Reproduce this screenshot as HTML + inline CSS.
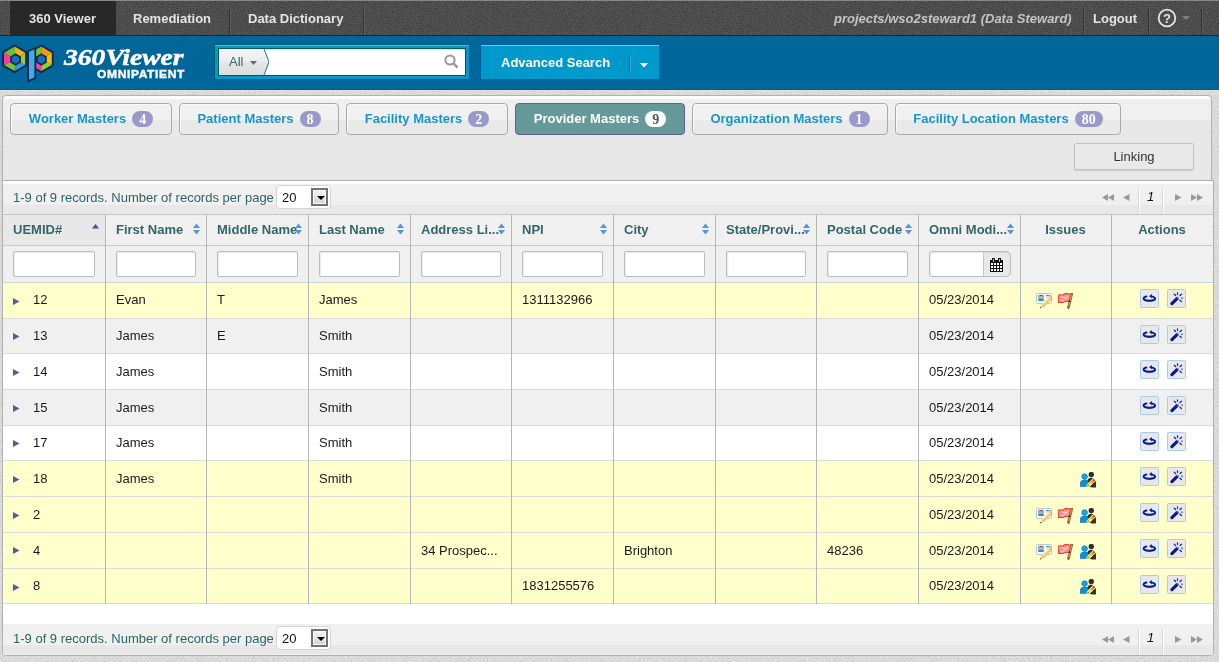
<!DOCTYPE html>
<html><head><meta charset="utf-8"><title>360 Viewer</title>
<style>
*{box-sizing:border-box;margin:0;padding:0}
html,body{width:1219px;height:662px;overflow:hidden}
body{position:relative;font-family:"Liberation Sans",sans-serif;font-size:13px;background:#d9d9d9;color:#222}
.a{position:absolute;white-space:nowrap}
/* top bar */
#top{left:0;top:0;width:1219px;height:36px;background:#1e1e1e;border-top:1px solid #878787;border-bottom:1px solid #262222}
.tt{font-weight:bold;color:#e4e4e4;line-height:15px;top:11px}
.sep{top:9px;width:2px;height:26px;border-left:1px solid #323232;border-right:1px solid #5c5c5c}
/* blue */
#blue{left:0;top:36px;width:1219px;height:53px;background:#0068a6;overflow:hidden}
.tab{top:103px;height:32px;border:1px solid #a9a9a9;border-radius:4px;background:linear-gradient(#f1f1f1 0,#f1f1f1 16px,#e9e9e9 16px);box-shadow:inset 1px 1px 0 #fafafa;text-align:center;line-height:30px;font-weight:bold;color:#1a95cc}
.tab .bd{display:inline-block;margin-left:6px;height:16px;padding:0 7px;border-radius:8px;background:#9999cc;color:#fff;font-family:"Liberation Serif",serif;font-size:14px;line-height:17px;vertical-align:-1px;text-align:center}
.tab.act{background:#669999;border-color:#5d5d9a;color:#fff;box-shadow:none}
.tab.act .bd{background:#fff;color:#336666}
.tb{color:#2e6464;line-height:15px}
.th{top:222px;font-weight:bold;color:#336666;line-height:15px}
.fi{top:251px;width:82px;height:26px;border:1px solid #bcbcbc;border-radius:2px;background:#fff;box-shadow:inset 1px 1px 1px rgba(0,0,0,.08)}
.td{line-height:15px;color:#1a1a1a}
.ab{width:19px;height:19px;border:1px solid #a8ccf4;border-radius:1.5px;background:#e8e8e8;padding:0}
.ab svg{display:block}
.sel{width:55px;height:24px;border:1px solid #d4d4d4;border-radius:4px;background:#fff}
.sel span{position:absolute;left:5px;top:4px;line-height:15px;color:#111;font-size:13px}
.sel i{position:absolute;left:34px;top:2px;width:17px;height:18px;border:2px solid #727272;box-shadow:inset 0 0 0 1px #fafafa;background:linear-gradient(#f4f4f4,#d4d4d4)}
.sel i:after{content:"";position:absolute;left:3.5px;top:5.5px;border-left:4px solid transparent;border-right:4px solid transparent;border-top:4.5px solid #000}
</style></head><body><div id="wrap" style="position:absolute;left:0;top:0;width:1219px;height:662px;will-change:transform">
<svg width="0" height="0" style="position:absolute"><defs>
<symbol id="ic_i" viewBox="0 0 16 16"><rect x="0.5" y="0.5" width="15" height="10" rx="0.8" fill="#fbfbfb" stroke="#c4c4c4"/><rect x="2" y="1.8" width="6" height="6.2" fill="#7cbcf0"/><path d="M2.3 8Q2.6 5.6 5 5.6Q7.4 5.6 7.7 8Z" fill="#2a8ae0"/><circle cx="5" cy="4" r="1.6" fill="#f2b070"/><path d="M3.4 3.6Q3.6 2 5 2Q6.6 2 6.6 3.4Q5.2 2.6 3.4 3.6Z" fill="#8a3a20"/><rect x="9.8" y="2" width="4.2" height="1.2" rx="0.5" fill="#3a9ae8"/><rect x="9.8" y="4.2" width="4" height="0.8" fill="#d8d8d8"/><path d="M5.6 11.6L13.4 3.8L15.8 6.2L8 14Z" fill="#f6c458"/><path d="M5.6 11.6L13.4 3.8L14.3 4.7L6.5 12.5Z" fill="#fde8b0"/><path d="M13.4 3.8L14.6 2.6L17 5L15.8 6.2Z" fill="#f0a0a0"/><path d="M3.8 15.6L5.6 11.6L8 14Z" fill="#f4e0c0"/><path d="M3.8 15.6L4.6 13.8L5.6 14.8Z" fill="#5a2a10"/><path d="M5.6 11.6L8 14" stroke="#8ab040" stroke-width="0.6"/></symbol>
<symbol id="ic_f" viewBox="0 0 16 16"><path d="M0.8 2Q3 1.5 5 2.2Q6 0.6 8 0.5Q10.5 0.6 12.6 1.2L11.8 8Q9 8.6 7.4 8.4Q6.2 8.8 5.8 9.2Q3.2 9.8 0.6 9.4Z" fill="#ff9898" stroke="#f03a1a" stroke-width="1.1"/><path d="M2.5 4.5Q4.5 3.5 6 4.6T10 3.5M2.8 7Q5 6.5 6.5 7.2" stroke="#fff0f0" stroke-width="1" fill="none" opacity="0.8"/><path d="M3 5Q4 4 5 5.6L4 7Z" fill="#ff5a5a"/><path d="M13.8 0.6L10.4 14.6" stroke="#9a6028" stroke-width="2.6" stroke-linecap="round"/><path d="M13.6 1.4L10.8 13" stroke="#e0c060" stroke-width="0.8"/><circle cx="11.5" cy="8.2" r="0.9" fill="#222"/></symbol>
<symbol id="ic_u" viewBox="0 0 16 16"><circle cx="11.3" cy="2.6" r="2.7" fill="#2e2e2e"/><path d="M6.8 9.5Q8.2 5.6 11.3 5.8Q14.8 6 15.8 9.5V15H9Z" fill="#2e2e2e"/><circle cx="4.6" cy="4.6" r="2.8" fill="#12a6e8" stroke="#0a6fb8" stroke-width="0.7"/><path d="M0.2 14.6V11Q0.6 8 4.6 8Q8.4 8 8.8 11V14.6Z" fill="#0d8fd4" stroke="#0a6fb8" stroke-width="0.6"/><path d="M11.2 15.6L15.9 10V15.6Z" fill="#333"/><path d="M6.2 15.4L7 12.4L13.6 5.6L16.2 8.2L9.4 15Z" fill="#fff"/><path d="M7.2 14.4L7.8 12.6L13.6 6.8L15 8.2L9.2 14Z" fill="#f8e000"/><path d="M10.6 10L13.6 6.8L15 8.2L12 11.4Z" fill="#ff8a00"/><path d="M12.6 7.8L13.6 6.8L15 8.2L14 9.2Z" fill="#e82a10"/><path d="M7.2 14.4L7.8 12.6L9.2 14Z" fill="#6a6a10"/></symbol>
<symbol id="ic_r" viewBox="0 0 17 17"><path d="M5.4 6.5Q2.5 7.2 2.6 8.7Q2.9 10.7 8.4 10.7Q14 10.7 14.1 8.6Q14.1 7.3 11.2 6.6" fill="none" stroke="#0a1e96" stroke-width="2" stroke-linecap="round"/><path d="M3.6 9.6Q5 11.2 8.4 11.2Q12 11.2 13.4 9.6" fill="none" stroke="#0a1e96" stroke-width="0.8"/><path d="M8 6.3L10.7 3.9L11.1 8.3Z" fill="#0a1e96"/></symbol>
<symbol id="ic_w" viewBox="0 0 17 17"><path d="M3.9 13.6L9.3 8.4" stroke="#0a1a8c" stroke-width="3.2" stroke-linecap="round"/><path d="M9.4 8.2L10.6 7.2" stroke="#8aa8ff" stroke-width="2"/><path d="M9.5 3V4.3M6.3 4.2L7.6 5.5M13.6 4.3L12 5.6M12 10.3L13.4 11.6" stroke="#1a2aa0" stroke-width="1.3" stroke-linecap="round"/><rect x="13.2" y="7.4" width="1.6" height="1.6" fill="#3a7ad8"/></symbol>
</defs></svg>


<svg class="a" style="left:0;top:0" width="1219" height="662"><filter id="nz2" x="0" y="0" width="100%" height="100%"><feTurbulence type="fractalNoise" baseFrequency="0.7" numOctaves="2" seed="11"/><feColorMatrix values="1 0 0 0 0  1 0 0 0 0  1 0 0 0 0  0 0 0 0 0.25"/></filter><rect width="1219" height="662" fill="#e4e4e4"/><rect width="1219" height="662" filter="url(#nz2)"/></svg>
<div id="top" class="a"></div>
<svg class="a" style="left:0;top:1px" width="1219" height="34"><filter id="nz" x="0" y="0" width="100%" height="100%"><feTurbulence type="fractalNoise" baseFrequency="0.8" numOctaves="2" seed="7"/><feColorMatrix values="1 0 0 0 0  1 0 0 0 0  1 0 0 0 0  0 0 0 0 0.3"/></filter><rect width="1219" height="34" filter="url(#nz)"/></svg>
<div class="a" style="left:10px;top:1px;width:106px;height:34px;background:#282828"></div>
<div class="a tt" style="left:29px">360 Viewer</div>
<div class="a tt" style="left:133px">Remediation</div>
<div class="a sep" style="left:229px"></div>
<div class="a tt" style="left:248px">Data Dictionary</div>
<div class="a sep" style="left:363px"></div>
<div class="a tt" style="left:834px;font-style:italic;color:#c4c4c4">projects/wso2steward1 (Data Steward)</div>
<div class="a sep" style="left:1083px"></div>
<div class="a tt" style="left:1093px">Logout</div>
<div class="a sep" style="left:1148px"></div>
<svg class="a" style="left:1157px;top:8px" width="20" height="20" viewBox="0 0 20 20"><circle cx="10" cy="10" r="8.3" fill="none" stroke="#e6e6e6" stroke-width="1.8"/><text x="10" y="14.6" text-anchor="middle" font-family="Liberation Sans" font-weight="bold" font-size="13" fill="#e6e6e6">?</text></svg>
<svg class="a" style="left:1182px;top:16px" width="8" height="5"><path d="M0 0H8L4 4Z" fill="#808080"/></svg>
<div class="a sep" style="left:1201px"></div>

<svg class="a" style="left:0;top:36px" width="1219" height="54">
<defs><pattern id="st" width="4" height="4" patternUnits="userSpaceOnUse"><rect width="4" height="4" fill="#006699"/><rect x="3" y="0" width="1" height="1" fill="#0060d8"/><rect x="2" y="1" width="1" height="1" fill="#0060d8"/><rect x="1" y="2" width="1" height="1" fill="#0060d8"/><rect x="0" y="3" width="1" height="1" fill="#0060d8"/></pattern></defs>
<rect width="1219" height="54" fill="url(#st)" shape-rendering="crispEdges"/>
<rect y="53" width="1219" height="1" fill="#0a5590"/>
</svg>
<!-- logo -->
<svg class="a" style="left:0;top:36px" width="200" height="54" viewBox="0 36 200 54">
<polygon points="14.60,44.40 27.07,51.60 27.07,66.00 14.60,73.20 2.13,66.00 2.13,51.60" fill="#0b2a5c"/>
<polygon points="15.60,59.50 14.60,46.60 25.17,52.70" fill="#f5b800"/>
<polygon points="15.60,59.50 25.17,52.70 25.17,64.90" fill="#9ccc2a"/>
<polygon points="15.60,59.50 25.17,64.90 14.60,71.00" fill="#2aa0d8"/>
<polygon points="15.60,59.50 14.60,71.00 4.03,64.90" fill="#7cc22a"/>
<polygon points="15.60,59.50 4.03,64.90 4.03,52.70" fill="#ff3c9a"/>
<polygon points="15.60,59.50 4.03,52.70 14.60,46.60" fill="#6cc030"/>
<polygon points="15.60,53.30 20.97,56.40 20.97,62.60 15.60,65.70 10.23,62.60 10.23,56.40" fill="#0b2a5c"/>
<polygon points="15.60,55.30 19.24,57.40 19.24,61.60 15.60,63.70 11.96,61.60 11.96,57.40" fill="#1a6fb0"/>
<polygon points="41.20,44.40 53.67,51.60 53.67,66.00 41.20,73.20 28.73,66.00 28.73,51.60" fill="#0b2a5c"/>
<polygon points="41.40,59.50 41.20,46.60 51.77,52.70" fill="#f59a10"/>
<polygon points="41.40,59.50 51.77,52.70 51.77,64.90" fill="#f5c000"/>
<polygon points="41.40,59.50 51.77,64.90 41.20,71.00" fill="#9ccc2a"/>
<polygon points="41.40,59.50 41.20,71.00 30.63,64.90" fill="#ff3c9a"/>
<polygon points="41.40,59.50 30.63,64.90 30.63,52.70" fill="#9ccc2a"/>
<polygon points="41.40,59.50 30.63,52.70 41.20,46.60" fill="#7cc22a"/>
<polygon points="41.40,53.30 46.77,56.40 46.77,62.60 41.40,65.70 36.03,62.60 36.03,56.40" fill="#0b2a5c"/>
<polygon points="41.40,55.30 45.04,57.40 45.04,61.60 41.40,63.70 37.76,61.60 37.76,57.40" fill="#1a6fb0"/>
<polygon points="27.2,50.5 36.2,47 36.2,78.5 27.2,82.5" fill="#0b2a5c"/><polygon points="29,51.8 34.4,49.6 34.4,77.4 29,79.8" fill="#4aa8e0"/>
<text x="0" y="0" transform="translate(64,64.5) scale(1.2,1)" font-family="Liberation Serif" font-style="italic" font-weight="bold" font-size="23" fill="#fff" stroke="#fff" stroke-width="0.5">360Viewer</text>
<text x="0" y="0" transform="translate(97,77.6) scale(1.2,1)" font-family="Liberation Sans" font-weight="bold" font-size="10" letter-spacing="0.55" fill="#fff" stroke="#fff" stroke-width="0.35">OMNIPATIENT</text>
</svg>
<!-- search -->
<div class="a" style="left:214px;top:44px;width:256px;height:36px;background:#0099cc;border:1px solid #005f66;box-shadow:inset 0 1px 0 #33cccc"></div>
<div class="a" style="left:218px;top:48px;width:248px;height:28px;background:#fff;border:1px solid #005a5a;box-shadow:inset 0 2px 2px -1px #d8d4d4"></div>
<svg class="a" style="left:219px;top:49px" width="50" height="26"><defs><linearGradient id="ag" x1="0" y1="0" x2="0" y2="1"><stop offset="0" stop-color="#f6f6f6"/><stop offset="0.5" stop-color="#ececec"/><stop offset="0.5" stop-color="#e6e6e6"/><stop offset="1" stop-color="#dcdcdc"/></linearGradient></defs><path d="M0 0H45L50 13L45 26H0Z" fill="url(#ag)"/><path d="M45 0L50 13L45 26" fill="none" stroke="#2a6ab0" stroke-width="1"/></svg>
<div class="a" style="left:229px;top:54px;line-height:15px;color:#336666">All</div>
<svg class="a" style="left:250px;top:61px" width="8" height="5"><path d="M0 0H7L3.5 4Z" fill="#6a5fa0"/></svg>
<svg class="a" style="left:443px;top:53px" width="18" height="18"><circle cx="7" cy="7" r="4.6" fill="none" stroke="#999" stroke-width="2"/><path d="M10.2 10.2L14.6 14.6" stroke="#999" stroke-width="2.6"/></svg>
<!-- advanced search -->
<div class="a" style="left:481px;top:45px;width:178px;height:34px;background:#0099cc;border-top:1px solid #66ccff;box-shadow:0 0 0 1px #005f95"></div>
<div class="a" style="left:501px;top:55px;line-height:15px;font-weight:bold;color:#fff">Advanced Search</div>
<div class="a" style="left:629px;top:56px;width:2px;height:17px;border-left:1px solid #0a4f9a;border-right:1px solid #30aee0"></div>
<svg class="a" style="left:640px;top:63px" width="9" height="5"><path d="M0 0H8L4 4.5Z" fill="#fff"/></svg>

<!-- tab panel -->
<div class="a" style="left:0;top:90px;width:1219px;height:1px;background:#e4e0de"></div>
<div class="a" style="left:2px;top:95px;width:1210px;height:86px;border:1px solid #b0b0b0;border-radius:4px 4px 0 0;background:linear-gradient(#fff 0,#fff 3px,#f0f0f0 3px,#f0f0f0 24px,#e8e8e8 24px)"></div>
<div class="a tab" style="left:10px;width:162px"><span class="tn">Worker Masters</span><span class="bd">4</span></div>
<div class="a tab" style="left:179px;width:160px"><span class="tn">Patient Masters</span><span class="bd">8</span></div>
<div class="a tab" style="left:346px;width:162px"><span class="tn">Facility Masters</span><span class="bd">2</span></div>
<div class="a tab act" style="left:515px;width:170px"><span class="tn">Provider Masters</span><span class="bd">9</span></div>
<div class="a tab" style="left:692px;width:196px"><span class="tn">Organization Masters</span><span class="bd">1</span></div>
<div class="a tab" style="left:895px;width:226px"><span class="tn">Facility Location Masters</span><span class="bd">80</span></div>
<div class="a" style="left:1074px;top:143px;width:120px;height:27px;border:1px solid #c4c4c4;border-radius:2px;background:#e9e9e9;box-shadow:0 1px 1px rgba(0,0,0,.12);color:#333;text-align:center;line-height:25px">Linking</div>
<!-- grid -->
<div class="a" style="left:2px;top:180px;width:1212px;height:476px;border:1px solid #b0b0b0;border-radius:0 0 4px 4px;background:#fff;overflow:hidden">
</div>
<div class="a" style="left:3px;top:181px;width:1210px;height:33px;background:linear-gradient(#fff 0,#fff 3px,#f0f0f0 3px,#f0f0f0 24px,#e8e8e8 24px)"></div>
<div class="a tb" style="left:13px;top:190px">1-9 of 9 records. Number of records per page</div>
<div class="a" style="left:3px;top:214px;width:1210px;height:68px;background:#f0f0f0;border-top:1px solid #c4c4c4"></div>
<div class="a" style="left:3px;top:215px;width:102px;height:30px;background:#e8e8e8"></div>
<div class="a" style="left:3px;top:245px;width:1210px;height:1px;background:#c8c8c8"></div>
<div class="a th" style="left:13px">UEMID#</div>
<div class="a th" style="left:116px">First Name</div>
<div class="a th" style="left:217px">Middle Name</div>
<div class="a th" style="left:319px">Last Name</div>
<div class="a th" style="left:421px">Address Li...</div>
<div class="a th" style="left:522px">NPI</div>
<div class="a th" style="left:624px">City</div>
<div class="a th" style="left:726px">State/Provi...</div>
<div class="a th" style="left:827px">Postal Code</div>
<div class="a th" style="left:929px">Omni Modi...</div>
<div class="a th" style="left:1020px;width:91px;text-align:center">Issues</div>
<div class="a th" style="left:1111px;width:102px;text-align:center">Actions</div>
<svg class="a" style="left:92px;top:224px" width="8" height="5"><path d="M0 4.5L3.5 0L7 4.5Z" fill="#4f4f8f"/></svg>
<svg class="a" style="left:193px;top:223px" width="8" height="12"><path d="M0 5L3.5 0.5L7 5Z M0 7L3.5 11.5L7 7Z" fill="#5b93d3"/></svg>
<svg class="a" style="left:295px;top:223px" width="8" height="12"><path d="M0 5L3.5 0.5L7 5Z M0 7L3.5 11.5L7 7Z" fill="#5b93d3"/></svg>
<svg class="a" style="left:397px;top:223px" width="8" height="12"><path d="M0 5L3.5 0.5L7 5Z M0 7L3.5 11.5L7 7Z" fill="#5b93d3"/></svg>
<svg class="a" style="left:498px;top:223px" width="8" height="12"><path d="M0 5L3.5 0.5L7 5Z M0 7L3.5 11.5L7 7Z" fill="#5b93d3"/></svg>
<svg class="a" style="left:600px;top:223px" width="8" height="12"><path d="M0 5L3.5 0.5L7 5Z M0 7L3.5 11.5L7 7Z" fill="#5b93d3"/></svg>
<svg class="a" style="left:702px;top:223px" width="8" height="12"><path d="M0 5L3.5 0.5L7 5Z M0 7L3.5 11.5L7 7Z" fill="#5b93d3"/></svg>
<svg class="a" style="left:803px;top:223px" width="8" height="12"><path d="M0 5L3.5 0.5L7 5Z M0 7L3.5 11.5L7 7Z" fill="#5b93d3"/></svg>
<svg class="a" style="left:905px;top:223px" width="8" height="12"><path d="M0 5L3.5 0.5L7 5Z M0 7L3.5 11.5L7 7Z" fill="#5b93d3"/></svg>
<svg class="a" style="left:1007px;top:223px" width="8" height="12"><path d="M0 5L3.5 0.5L7 5Z M0 7L3.5 11.5L7 7Z" fill="#5b93d3"/></svg>
<div class="a fi" style="left:13px;width:82px"></div>
<div class="a fi" style="left:116px;width:80px"></div>
<div class="a fi" style="left:217px;width:81px"></div>
<div class="a fi" style="left:319px;width:81px"></div>
<div class="a fi" style="left:421px;width:80px"></div>
<div class="a fi" style="left:522px;width:81px"></div>
<div class="a fi" style="left:624px;width:81px"></div>
<div class="a fi" style="left:726px;width:80px"></div>
<div class="a fi" style="left:827px;width:81px"></div>
<div class="a fi" style="left:929px;width:82px;border-radius:3px 5px 5px 3px;background:linear-gradient(90deg,#fff 0,#fff 54px,#e9e9e9 54px)"></div>
<div class="a" style="left:983px;top:252px;width:1px;height:24px;background:#c8c8c8"></div>
<svg class="a" style="left:989px;top:257px" width="15" height="15" viewBox="0 0 15 15" shape-rendering="crispEdges"><rect x="1" y="3" width="13" height="12" fill="#111"/><rect x="3" y="1" width="3" height="4" fill="#111"/><rect x="9" y="1" width="3" height="4" fill="#111"/><rect x="4" y="2" width="1" height="3" fill="#bbb"/><rect x="10" y="2" width="1" height="3" fill="#bbb"/><g fill="#fff"><rect x="2" y="6" width="2" height="2"/><rect x="5" y="6" width="2" height="2"/><rect x="8" y="6" width="2" height="2"/><rect x="11" y="6" width="2" height="2"/><rect x="2" y="9" width="2" height="2"/><rect x="5" y="9" width="2" height="2"/><rect x="8" y="9" width="2" height="2"/><rect x="11" y="9" width="2" height="2"/><rect x="2" y="12" width="2" height="2"/><rect x="5" y="12" width="2" height="2"/><rect x="8" y="12" width="2" height="2"/><rect x="11" y="12" width="2" height="2"/></g></svg>
<div class="a" style="left:3px;top:282px;width:1210px;height:1px;background:#d2d2d6"></div>
<div class="a" style="left:3px;top:283px;width:1210px;height:35px;background:#ffffcc"></div>
<div class="a" style="left:3px;top:318px;width:1210px;height:1px;background:#dcdcdc"></div>
<svg class="a" style="left:13px;top:298px" width="7" height="8"><path d="M0 0L6.5 3.5L0 7Z" fill="#5a5a9a"/></svg>
<div class="a td" style="left:33px;top:292px">12</div>
<div class="a td" style="left:116px;top:292px">Evan</div>
<div class="a td" style="left:217px;top:292px">T</div>
<div class="a td" style="left:319px;top:292px">James</div>
<div class="a td" style="left:522px;top:292px">1311132966</div>
<div class="a td" style="left:929px;top:292px">05/23/2014</div>
<svg class="a" style="left:1036px;top:293px" width="16" height="16"><use href="#ic_i"/></svg>
<svg class="a" style="left:1058px;top:293px" width="16" height="16"><use href="#ic_f"/></svg>
<div class="a ab" style="left:1140px;top:289px"><svg width="17" height="17"><use href="#ic_r"/></svg></div>
<div class="a ab" style="left:1167px;top:289px"><svg width="17" height="17"><use href="#ic_w"/></svg></div>
<div class="a" style="left:3px;top:319px;width:1210px;height:34px;background:#f0f0f0"></div>
<div class="a" style="left:3px;top:353px;width:1210px;height:1px;background:#dcdcdc"></div>
<svg class="a" style="left:13px;top:333px" width="7" height="8"><path d="M0 0L6.5 3.5L0 7Z" fill="#5a5a9a"/></svg>
<div class="a td" style="left:33px;top:328px">13</div>
<div class="a td" style="left:116px;top:328px">James</div>
<div class="a td" style="left:217px;top:328px">E</div>
<div class="a td" style="left:319px;top:328px">Smith</div>
<div class="a td" style="left:929px;top:328px">05/23/2014</div>
<div class="a ab" style="left:1140px;top:325px"><svg width="17" height="17"><use href="#ic_r"/></svg></div>
<div class="a ab" style="left:1167px;top:325px"><svg width="17" height="17"><use href="#ic_w"/></svg></div>
<div class="a" style="left:3px;top:354px;width:1210px;height:35px;background:#ffffff"></div>
<div class="a" style="left:3px;top:389px;width:1210px;height:1px;background:#dcdcdc"></div>
<svg class="a" style="left:13px;top:369px" width="7" height="8"><path d="M0 0L6.5 3.5L0 7Z" fill="#5a5a9a"/></svg>
<div class="a td" style="left:33px;top:364px">14</div>
<div class="a td" style="left:116px;top:364px">James</div>
<div class="a td" style="left:319px;top:364px">Smith</div>
<div class="a td" style="left:929px;top:364px">05/23/2014</div>
<div class="a ab" style="left:1140px;top:360px"><svg width="17" height="17"><use href="#ic_r"/></svg></div>
<div class="a ab" style="left:1167px;top:360px"><svg width="17" height="17"><use href="#ic_w"/></svg></div>
<div class="a" style="left:3px;top:390px;width:1210px;height:35px;background:#f0f0f0"></div>
<div class="a" style="left:3px;top:425px;width:1210px;height:1px;background:#dcdcdc"></div>
<svg class="a" style="left:13px;top:405px" width="7" height="8"><path d="M0 0L6.5 3.5L0 7Z" fill="#5a5a9a"/></svg>
<div class="a td" style="left:33px;top:400px">15</div>
<div class="a td" style="left:116px;top:400px">James</div>
<div class="a td" style="left:319px;top:400px">Smith</div>
<div class="a td" style="left:929px;top:400px">05/23/2014</div>
<div class="a ab" style="left:1140px;top:396px"><svg width="17" height="17"><use href="#ic_r"/></svg></div>
<div class="a ab" style="left:1167px;top:396px"><svg width="17" height="17"><use href="#ic_w"/></svg></div>
<div class="a" style="left:3px;top:426px;width:1210px;height:34px;background:#ffffff"></div>
<div class="a" style="left:3px;top:460px;width:1210px;height:1px;background:#dcdcdc"></div>
<svg class="a" style="left:13px;top:440px" width="7" height="8"><path d="M0 0L6.5 3.5L0 7Z" fill="#5a5a9a"/></svg>
<div class="a td" style="left:33px;top:435px">17</div>
<div class="a td" style="left:116px;top:435px">James</div>
<div class="a td" style="left:319px;top:435px">Smith</div>
<div class="a td" style="left:929px;top:435px">05/23/2014</div>
<div class="a ab" style="left:1140px;top:432px"><svg width="17" height="17"><use href="#ic_r"/></svg></div>
<div class="a ab" style="left:1167px;top:432px"><svg width="17" height="17"><use href="#ic_w"/></svg></div>
<div class="a" style="left:3px;top:461px;width:1210px;height:35px;background:#ffffcc"></div>
<div class="a" style="left:3px;top:496px;width:1210px;height:1px;background:#dcdcdc"></div>
<svg class="a" style="left:13px;top:476px" width="7" height="8"><path d="M0 0L6.5 3.5L0 7Z" fill="#5a5a9a"/></svg>
<div class="a td" style="left:33px;top:471px">18</div>
<div class="a td" style="left:116px;top:471px">James</div>
<div class="a td" style="left:319px;top:471px">Smith</div>
<div class="a td" style="left:929px;top:471px">05/23/2014</div>
<svg class="a" style="left:1080px;top:472px" width="16" height="16"><use href="#ic_u"/></svg>
<div class="a ab" style="left:1140px;top:467px"><svg width="17" height="17"><use href="#ic_r"/></svg></div>
<div class="a ab" style="left:1167px;top:467px"><svg width="17" height="17"><use href="#ic_w"/></svg></div>
<div class="a" style="left:3px;top:497px;width:1210px;height:35px;background:#ffffcc"></div>
<div class="a" style="left:3px;top:532px;width:1210px;height:1px;background:#dcdcdc"></div>
<svg class="a" style="left:13px;top:512px" width="7" height="8"><path d="M0 0L6.5 3.5L0 7Z" fill="#5a5a9a"/></svg>
<div class="a td" style="left:33px;top:507px">2</div>
<div class="a td" style="left:929px;top:507px">05/23/2014</div>
<svg class="a" style="left:1036px;top:508px" width="16" height="16"><use href="#ic_i"/></svg>
<svg class="a" style="left:1058px;top:508px" width="16" height="16"><use href="#ic_f"/></svg>
<svg class="a" style="left:1080px;top:508px" width="16" height="16"><use href="#ic_u"/></svg>
<div class="a ab" style="left:1140px;top:503px"><svg width="17" height="17"><use href="#ic_r"/></svg></div>
<div class="a ab" style="left:1167px;top:503px"><svg width="17" height="17"><use href="#ic_w"/></svg></div>
<div class="a" style="left:3px;top:533px;width:1210px;height:35px;background:#ffffcc"></div>
<div class="a" style="left:3px;top:568px;width:1210px;height:1px;background:#dcdcdc"></div>
<svg class="a" style="left:13px;top:547px" width="7" height="8"><path d="M0 0L6.5 3.5L0 7Z" fill="#5a5a9a"/></svg>
<div class="a td" style="left:33px;top:543px">4</div>
<div class="a td" style="left:421px;top:543px">34 Prospec...</div>
<div class="a td" style="left:624px;top:543px">Brighton</div>
<div class="a td" style="left:827px;top:543px">48236</div>
<div class="a td" style="left:929px;top:543px">05/23/2014</div>
<svg class="a" style="left:1036px;top:544px" width="16" height="16"><use href="#ic_i"/></svg>
<svg class="a" style="left:1058px;top:544px" width="16" height="16"><use href="#ic_f"/></svg>
<svg class="a" style="left:1080px;top:544px" width="16" height="16"><use href="#ic_u"/></svg>
<div class="a ab" style="left:1140px;top:539px"><svg width="17" height="17"><use href="#ic_r"/></svg></div>
<div class="a ab" style="left:1167px;top:539px"><svg width="17" height="17"><use href="#ic_w"/></svg></div>
<div class="a" style="left:3px;top:569px;width:1210px;height:34px;background:#ffffcc"></div>
<div class="a" style="left:3px;top:603px;width:1210px;height:1px;background:#dcdcdc"></div>
<svg class="a" style="left:13px;top:584px" width="7" height="8"><path d="M0 0L6.5 3.5L0 7Z" fill="#5a5a9a"/></svg>
<div class="a td" style="left:33px;top:578px">8</div>
<div class="a td" style="left:522px;top:578px">1831255576</div>
<div class="a td" style="left:929px;top:578px">05/23/2014</div>
<svg class="a" style="left:1080px;top:579px" width="16" height="16"><use href="#ic_u"/></svg>
<div class="a ab" style="left:1140px;top:575px"><svg width="17" height="17"><use href="#ic_r"/></svg></div>
<div class="a ab" style="left:1167px;top:575px"><svg width="17" height="17"><use href="#ic_w"/></svg></div>
<div class="a" style="left:105px;top:214px;width:1px;height:390px;background:#b6b6b6"></div>
<div class="a" style="left:206px;top:214px;width:1px;height:390px;background:#b6b6b6"></div>
<div class="a" style="left:308px;top:214px;width:1px;height:390px;background:#b6b6b6"></div>
<div class="a" style="left:410px;top:214px;width:1px;height:390px;background:#b6b6b6"></div>
<div class="a" style="left:511px;top:214px;width:1px;height:390px;background:#b6b6b6"></div>
<div class="a" style="left:613px;top:214px;width:1px;height:390px;background:#b6b6b6"></div>
<div class="a" style="left:715px;top:214px;width:1px;height:390px;background:#b6b6b6"></div>
<div class="a" style="left:816px;top:214px;width:1px;height:390px;background:#b6b6b6"></div>
<div class="a" style="left:918px;top:214px;width:1px;height:390px;background:#b6b6b6"></div>
<div class="a" style="left:1020px;top:214px;width:1px;height:390px;background:#b6b6b6"></div>
<div class="a" style="left:1111px;top:214px;width:1px;height:390px;background:#b6b6b6"></div>
<div class="a" style="left:3px;top:624px;width:1210px;height:31px;border-radius:0 0 3px 3px;background:linear-gradient(#f0f0f0 0,#f0f0f0 21px,#e8e8e8 21px,#e8e8e8 30px,#eee 30px)"></div>
<div class="a tb" style="left:13px;top:631px">1-9 of 9 records. Number of records per page</div>
<div class="a sel" style="left:276px;top:185px"><span>20</span><i></i></div>
<svg class="a" style="left:1102px;top:194px" width="13" height="8"><path d="M0 3.5L6 0V7Z M6 3.5L12 0V7Z" fill="#999"/></svg>
<svg class="a" style="left:1123px;top:194px" width="8" height="8"><path d="M0 3.5L6.5 0V7Z" fill="#999"/></svg>
<div class="a" style="left:1139px;top:187px;width:1px;height:27px;background:#fff;box-shadow:-1px 0 0 #dcdcdc"></div>
<div class="a" style="left:1163px;top:187px;width:1px;height:27px;background:#fff;box-shadow:-1px 0 0 #dcdcdc"></div>
<div class="a" style="left:1147px;top:189px;font-style:italic;color:#111;line-height:15px">1</div>
<svg class="a" style="left:1175px;top:194px" width="8" height="8"><path d="M0 0L6.5 3.5L0 7Z" fill="#999"/></svg>
<svg class="a" style="left:1191px;top:194px" width="13" height="8"><path d="M0 0L6 3.5L0 7Z M6 0L12 3.5L6 7Z" fill="#999"/></svg>
<div class="a sel" style="left:276px;top:626px"><span>20</span><i></i></div>
<svg class="a" style="left:1102px;top:636px" width="13" height="8"><path d="M0 3.5L6 0V7Z M6 3.5L12 0V7Z" fill="#999"/></svg>
<svg class="a" style="left:1123px;top:636px" width="8" height="8"><path d="M0 3.5L6.5 0V7Z" fill="#999"/></svg>
<div class="a" style="left:1139px;top:628px;width:1px;height:27px;background:#fff;box-shadow:-1px 0 0 #dcdcdc"></div>
<div class="a" style="left:1163px;top:628px;width:1px;height:27px;background:#fff;box-shadow:-1px 0 0 #dcdcdc"></div>
<div class="a" style="left:1147px;top:630px;font-style:italic;color:#111;line-height:15px">1</div>
<svg class="a" style="left:1175px;top:636px" width="8" height="8"><path d="M0 0L6.5 3.5L0 7Z" fill="#999"/></svg>
<svg class="a" style="left:1191px;top:636px" width="13" height="8"><path d="M0 0L6 3.5L0 7Z M6 0L12 3.5L6 7Z" fill="#999"/></svg>
</div></body></html>
